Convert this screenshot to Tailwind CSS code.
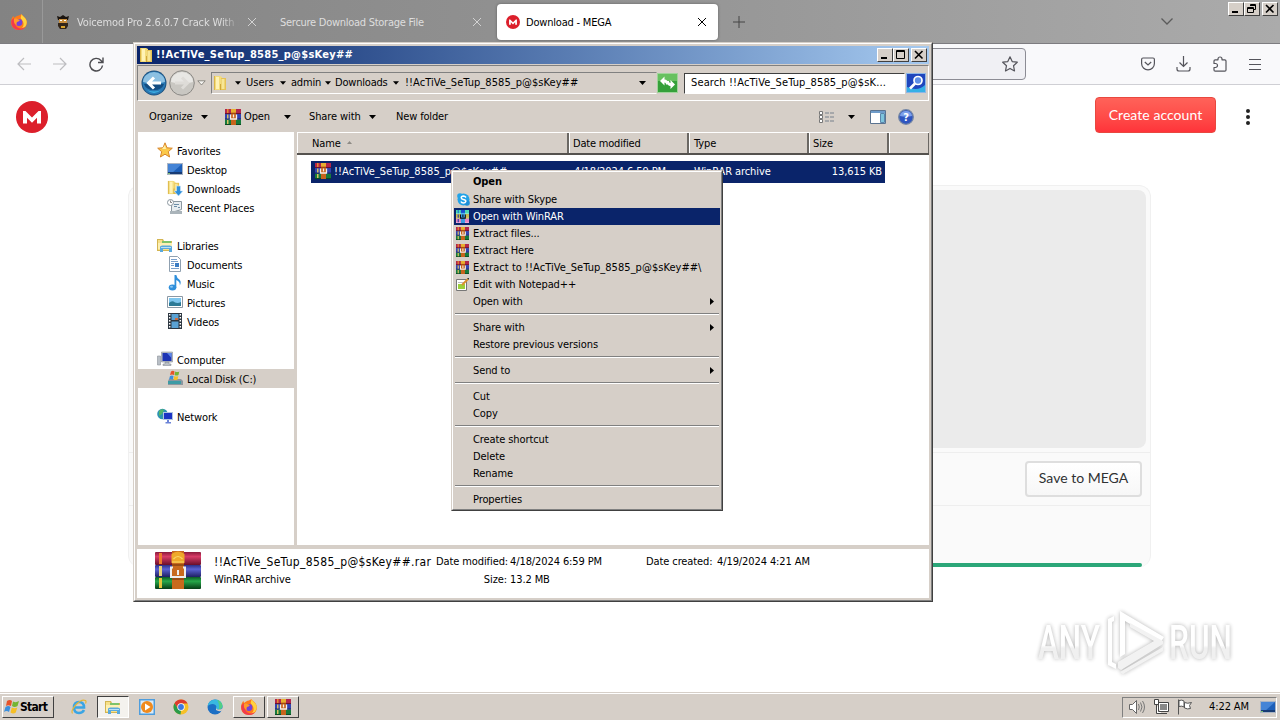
<!DOCTYPE html>
<html lang="en">
<head>
<meta charset="utf-8" />
<title>Download - MEGA</title>
<script src="https://cdn.jsdelivr.net/npm/@tailwindcss/browser@4"></script>
</head>
<body class="w-[1280px] h-[720px] overflow-hidden bg-white font-['DejaVu_Sans_Condensed','DejaVu_Sans',sans-serif] text-[11px] text-black whitespace-nowrap">

<!-- shared icons -->
<svg class="hidden">
  <symbol id="rar" viewBox="0 0 16 16">
    <path fill="#b3264a" d="M0 0h16v5H0z"/><path fill="#3344b0" d="M0 5h16v5.500H0z"/><path fill="#157a3c" d="M0 10.500h16V16H0z"/>
    <path fill="#6b1230" d="M0 4h16v1H0z"/><path fill="#1a2268" d="M0 9.500h16v1H0z"/><path fill="#0b4a22" d="M0 15h16v1H0z"/>
    <path fill="#e88a2c" d="M2 0h1.500v4H2z"/><path fill="#d8c060" d="M2 5.500h1.500v4H2zM2 11h1.500v4H2z"/>
    <path fill="#c8641c" d="M6 0h5v16H6z"/><path fill="#e9b030" d="M6 0h5v3.500H6z"/><path fill="#a24a12" d="M6 4h5v1H6z"/>
    <path fill="none" stroke="#f4f0ea" stroke-width="1.300" d="M5.500 5.500v4.500h6v-4.500M8.500 5.500v3"/>
  </symbol>
  <symbol id="folder" viewBox="0 0 16 16">
    <path fill="#dcb748" d="M2 1h6v14H2z"/><path fill="#f3dc7c" d="M3 1h5l2 1v13H3z"/><path fill="#fff3b5" d="M4 2h3v12H4z"/>
    <path fill="#e6c255" d="M9 3h5v12H9z"/><path fill="#f7e696" d="M9.500 4h3v10h-3z"/><path fill="#cfa83a" d="M8 9h1v6H8z"/>
  </symbol>
  <symbol id="library" viewBox="0 0 16 16">
    <path fill="#d3b552" d="M0 2h6l1 2h8v10H0z"/><path fill="#f6e08a" d="M1 3h4l1 2h8v8H1z"/><path fill="#7cc36a" d="M5 4h9v3H5z"/>
    <path fill="#fdf0b4" d="M1 6h14v6H1z"/><path fill="#5aa9dd" d="M3 9.500l2-1h8l2 1V15h-3v-3H6v3H3z"/><path fill="#b8e0f7" d="M4 10h10v1H4z"/>
  </symbol>
  <symbol id="firefox" viewBox="0 0 16 16">
    <path fill="#ff7a1a" d="M8 1.500C10 .5 10.500 0 10.500 0c.5 2 4 3 5 6.500C17 12 13 16 8 16S0 12.500 0 8.500C0 5 1.500 2.500 2.500 2l.5 2c1-1 3-2.500 5-2.500z"/>
    <path fill="#ffd23c" d="M10.500 0c.5 2 5 4 5.200 7.500C16 12 13 14.500 10 15c3-2.500 3-5 2-7.500-1-2-3-3-2-5z"/>
    <path fill="#f03a4e" d="M.3 7C0 12 3 16 8 16c3 0 5-1 6-3-3 2-7 2-9-1C3 9.500 3 6 3 4 1.500 5 .7 6 .3 7z"/>
    <circle cx="8" cy="8.500" r="3.400" fill="#7542d8"/><path fill="#ff9a2a" d="M3 5c2-1 3 0 4 .3L9 6 7.500 7.500C5 8 5.500 10 6 11 3 10 2.500 7 3 5z"/>
  </symbol>
  <symbol id="mega" viewBox="0 0 32 32">
    <circle cx="16" cy="16" r="16" fill="#dc1f2b"/>
    <path fill="#fff" d="M7 22.500V10h2.500l6.500 6.500L22.500 10H25v12.500h-4V16.800l-5 5-5-5v5.700z"/>
  </symbol>
  <symbol id="close" viewBox="0 0 10 10"><path fill="none" stroke="currentColor" d="M1 1l8 8M9 1L1 9"/></symbol>
  <symbol id="down" viewBox="0 0 7 4"><path fill="currentColor" d="M0 0h7L3.500 4z"/></symbol>
  <symbol id="monitor" viewBox="0 0 16 16">
    <path fill="#a9b4c4" d="M0 2h16v12H0z"/><path fill="#1d5fb8" d="M1 3h14v9H1z"/><path fill="#4484d6" d="M1 3h14L5 12H1z"/><path fill="#173b75" d="M1 11h14v2H1z"/><path fill="#7cc36a" d="M1 12h2v1H1z"/>
  </symbol>
</svg>

<div class="flex flex-col w-full h-full">

  <!-- tab strip -->
  <div class="flex items-center h-[44px] shrink-0 border-b border-[#7d7c80] bg-linear-to-r from-[#838383] via-[#949494] to-[#ababab]">
    <div class="flex items-center justify-center w-[43px] h-full border-r border-[#999] pr-1"><svg class="w-4 h-4"><use href="#firefox"/></svg></div>
    <div class="flex items-center w-[222px] pl-[13px] text-[#dedede]">
      <svg class="w-[14px] h-[15px] mr-[7px]" viewBox="0 0 14 15"><path fill="#1b1510" d="M1 2l3 1 3-2 3 2 3-1-1 4H2z"/><path fill="#c98f3e" d="M3 5h8v5H3z"/><path fill="#32251a" d="M2 9h10v3l-2 3H4l-2-3z"/><path fill="#fff" d="M4 6h2v1H4zM8 6h2v1H8z"/><path fill="#d9a32c" d="M5 12h4v2H5z"/></svg>
      <span class="w-[162px] pt-1 overflow-hidden tracking-[-0.14px] mask-r-from-90%">Voicemod Pro 2.6.0.7 Crack With L</span>
      <svg class="w-[10px] h-[10px] ml-2 text-[#d2d2d2]"><use href="#close"/></svg>
    </div>
    <div class="flex items-center w-[232px] pl-[15px] text-[#dedede]">
      <span class="w-[192px] pt-1 tracking-[-0.27px]">Sercure Download Storage File</span>
      <svg class="w-[10px] h-[10px] text-[#d2d2d2]"><use href="#close"/></svg>
    </div>
    <div class="flex items-center w-[221px] h-9 pl-[9px] rounded bg-white shadow-[0_0_3px_rgba(0,0,0,.35)]">
      <svg class="w-[14px] h-[14px] mr-[6px]"><use href="#mega"/></svg>
      <span class="w-[171px] pt-[3px] tracking-[-0.2px]">Download - MEGA</span>
      <svg class="w-[10px] h-[10px]"><use href="#close"/></svg>
    </div>
    <svg class="w-3 h-3 ml-[15px] text-[#444]" viewBox="0 0 12 12"><path stroke="currentColor" d="M6 0v12M0 6h12"/></svg>
    <svg class="w-3 h-[7px] ml-[416px]" viewBox="0 0 12 7"><path fill="none" stroke="#5b5b5b" stroke-width="1.300" d="M.5.5L6 6 11.500.5"/></svg>
    <div class="flex self-start mt-[2px] ml-[55px]">
      <div class="w-4 h-[14px] bg-[#d6cfc8] border border-white border-r-[#404040] border-b-[#404040]"><svg viewBox="0 0 14 12"><path fill="#000" d="M3 8h6v2H3z"/></svg></div>
      <div class="w-4 h-[14px] bg-[#d6cfc8] border border-white border-r-[#404040] border-b-[#404040]"><svg viewBox="0 0 14 12"><path fill="none" stroke="#000" d="M5.500 3V1.500h5v5H9M5 2.500h6M2.500 4.500h6v5h-6zM2 5.500h7"/></svg></div>
      <div class="w-4 h-[14px] ml-[2px] bg-[#d6cfc8] border border-white border-r-[#404040] border-b-[#404040]"><svg viewBox="0 0 14 12"><path stroke="#000" stroke-width="1.600" d="M3 2l7.500 7.500M10.500 2L3 9.500"/></svg></div>
    </div>
  </div>

  <!-- navigation bar -->
  <div class="flex items-center h-[41px] shrink-0 bg-[#f9f9fb] border-b border-[#cfcfd4]">
    <svg class="w-[14px] h-[14px] ml-[17px]" viewBox="0 0 14 14" fill="none" stroke="#bdbdc0" stroke-width="1.200"><path d="M14 7H1M7 1L1 7l6 6"/></svg>
    <svg class="w-[14px] h-[14px] ml-[22px]" viewBox="0 0 14 14" fill="none" stroke="#bdbdc0" stroke-width="1.200"><path d="M0 7h13M7 1l6 6-6 6"/></svg>
    <svg class="w-[15px] h-[15px] ml-[22px]" viewBox="0 0 15 15" fill="none" stroke="#4c4c50" stroke-width="1.400"><path d="M13.500 8.500A6.300 6.300 0 1 1 12 3.500l1.500 1.500M14 .5V5.500H9"/></svg>
    <div class="flex items-center justify-end w-[772px] h-8 ml-[150px] pr-[7px] bg-[#f0f0f4] border border-[#8c8c94] rounded">
      <svg class="w-4 h-4" viewBox="0 0 16 16" fill="none" stroke="#55555c" stroke-width="1.200" stroke-linejoin="round"><path d="M8 .8l2.200 4.800 5.100.6-3.800 3.500 1 5.200L8 12.400 3.500 14.900l1-5.200L.7 6.200l5.100-.6z"/></svg>
    </div>
    <div class="flex items-center gap-[21px] ml-[115px]">
      <svg class="w-[14px] h-[14px]" viewBox="0 0 14 14" fill="none" stroke="#55555c" stroke-width="1.200"><path d="M2 1h10q1.400 0 1.400 1.400V6.500a6.400 6.400 0 0 1-12.800 0V2.400Q.6 1 2 1zM3.800 5L7 8l3.200-3"/></svg>
      <svg class="w-[15px] h-[16px]" viewBox="0 0 15 16" fill="none" stroke="#55555c" stroke-width="1.200"><path d="M7.500 0v10.500M3.500 6.500l4 4 4-4M1 11v2q0 2 2 2h9q2 0 2-2v-2"/></svg>
      <svg class="w-4 h-4" viewBox="0 0 16 16" fill="none" stroke="#55555c" stroke-width="1.200" stroke-linejoin="round"><path d="M2 5q0-1.200 1.200-1.200H6V3a2 2 0 0 1 4 0v.8h2.800Q14 3.800 14 5v9q0 1.200-1.200 1.200H3.200Q2 15.200 2 14v-2.500h1.500a2 2 0 0 0 0-4H2z"/></svg>
      <svg class="w-3 h-[11px]" viewBox="0 0 12 11"><path stroke="#55555c" d="M0 .5h12M0 5.500h12M0 10.500h12"/></svg>
    </div>
  </div>

  <!-- MEGA page -->
  <div class="flex-1 bg-white">
    <div class="flex h-[100px] pt-3 items-start">
      <svg class="w-8 h-8 ml-4 mt-1"><use href="#mega"/></svg>
      <div class="flex items-center justify-center w-[121px] h-9 ml-[1047px] pb-[2px] rounded bg-linear-to-b from-[#ff6259] to-[#ff333a] border border-[#e8483f] text-white font-[Lato,sans-serif] text-[14px] tracking-[0.05px]">Create account</div>
      <svg class="w-1 h-4 ml-[30px] mt-3" viewBox="0 0 4 16" fill="#222"><circle cx="2" cy="2" r="2"/><circle cx="2" cy="8" r="2"/><circle cx="2" cy="14" r="2"/></svg>
    </div>
    <div class="w-[1023px] ml-[128px] bg-[#fafafa] border border-b-0 border-[#f0f0f0] rounded-xl">
      <div class="h-[258px] mt-1 mx-1 rounded-lg bg-[#ebebeb]"></div>
      <div class="flex items-center justify-end h-[54px] mt-[4px] pr-[8px] border-y border-[#eee]">
        <div class="flex items-center justify-center w-[117px] h-9 pb-[3px] rounded border-2 border-[#dedede] bg-linear-to-b from-white to-[#f7f7f7] font-[Lato,sans-serif] text-[14px] text-[#303233]">Save to MEGA</div>
      </div>
      <div class="flex flex-col justify-end h-[61px] px-2"><div class="h-1 rounded-full bg-[#2ba678]"></div></div>
    </div>
  </div>

  <!-- taskbar -->
  <div class="h-[28px] shrink-0 bg-[#d6cfc8] border-t border-[#d6cfc8]">
    <div class="flex items-center h-full border-t border-white pl-[2px] pr-[3px]">
      <div class="flex items-center w-[52px] h-[22px] pl-[1px] bg-[#d6cfc8] border border-white border-r-[#404040] border-b-[#404040] font-bold text-[12px] tracking-[-0.7px]">
        <svg class="w-4 h-4 shrink-0" viewBox="0 0 16 16"><path fill="#e6532a" d="M3 2q3-2 5 0L7 7Q4 5.500 2 7z"/><path fill="#74b533" d="M9 2.500q3 1.500 6-.5l-1.500 5q-3 2-5.500 0z"/><path fill="#3b8fdd" d="M1.500 8q3-2 5 0l-1.500 5q-2.500-2-5 0z"/><path fill="#f6bf26" d="M7.800 8.500q3 1.500 5.500 0l-1.500 5q-2.500 2-5.300 0z"/></svg>Start
      </div>
      <svg class="w-4 h-4 ml-[17px]" viewBox="0 0 16 16" fill="none"><path stroke="#3aa5e4" stroke-width="2.600" d="M13 11q-1.500 3-5 3-5 0-5-5.500T8 3q5 0 5 5.500H4"/><path stroke="#e5b637" stroke-width="1.200" d="M1.500 14.500C-1 11 9-1 14.500 1.500q1 1 0 3"/></svg>
      <div class="flex items-center justify-center w-[32px] h-[22px] ml-[10px] bg-[#f4f2ee] border border-[#404040] border-r-white border-b-white"><svg class="w-4 h-4"><use href="#library"/></svg></div>
      <svg class="w-4 h-4 ml-[10px]" viewBox="0 0 16 16"><path fill="#4e9ddd" d="M0 0h16v16H0z"/><path fill="#dcebf7" d="M1.500 1.500h13v13h-13z"/><circle cx="8" cy="8" r="6" fill="#f08a1d"/><path fill="#fff" d="M6 4.500v7L11.500 8z"/></svg>
      <svg class="w-4 h-4 ml-[18px]" viewBox="0 0 16 16"><circle cx="8" cy="8" r="7.500" fill="#f6c026"/><path fill="#dc3b2f" d="M1.500 4.200A7.500 7.500 0 0 1 14.600 4.500H8L5 10z"/><path fill="#2a9b4a" d="M1.500 4.200L5 9.800 8 11.500 7.500 15.500A7.500 7.500 0 0 1 1.500 4.200z"/><circle cx="8" cy="8" r="3.700" fill="#fff"/><circle cx="8" cy="8" r="2.900" fill="#3c78e0"/></svg>
      <svg class="w-4 h-4 ml-[18px]" viewBox="0 0 16 16"><circle cx="8" cy="8" r="7.500" fill="#1c6fc4"/><path fill="#39b8e0" d="M.5 7Q2 .5 8.500.5 15 1 15.500 7q0 3-3.500 3.500-3 0-3-1.500 1-1.500-.5-3Q5 3.500.5 7z"/><path fill="#52cf84" d="M10 .8q5.500 2 5.500 6.500-.5 3-3.800 3.200Q13 5 10 .8z"/><path fill="#d6cfc8" d="M9 9q1 2 3 1.500 2.500 0 3.500-1.500v2.500q-4 1.500-6.500-.5z"/></svg>
      <div class="flex items-center justify-center w-[32px] h-[22px] ml-[10px] bg-[#d6cfc8] border border-white border-r-[#404040] border-b-[#404040]"><svg class="w-4 h-4"><use href="#firefox"/></svg></div>
      <div class="flex items-center justify-center w-[32px] h-[22px] ml-[2px] bg-[#d6cfc8] border border-white border-r-[#404040] border-b-[#404040]"><svg class="w-4 h-4"><use href="#rar"/></svg></div>
      <div class="flex items-center w-[155px] h-[21px] ml-auto pl-[6px] border border-[#808080] border-r-white border-b-white">
        <svg class="w-4 h-4" viewBox="0 0 16 16"><path fill="#fff" stroke="#666" d="M.5 5.500h3l4-4v13l-4-4h-3z"/><path fill="none" stroke="#777" d="M9.500 5q1.500 3 0 6M11.500 3.500q3 4.500 0 9M13.500 2q4 6 0 12"/></svg>
        <svg class="w-4 h-4 ml-2" viewBox="0 0 16 16"><path fill="#fff" stroke="#444" d="M5.500 3.500h10v9h-10zM1.500.5h4v5h-4zM3.500 5.500v9h5M7 14.500h7"/><path fill="#888" d="M7 5h7v6H7z"/></svg>
        <svg class="w-4 h-4 ml-2" viewBox="0 0 16 16"><path fill="#fff" stroke="#555" d="M1.500 15.500v-15M2 1.500q3-1 5 .5v6q-2-1.500-5-.5zM7.500 3.500q3 1.500 7 0l-2 3 1 3q-3 1-6-.5z"/></svg>
        <span class="ml-[16px] pt-[1px] tracking-[-0.1px]">4:22 AM</span>
        <svg class="w-4 h-4 ml-auto"><use href="#monitor"/></svg>
      </div>
    </div>
  </div>
</div>

<!-- watermark -->
<svg class="absolute left-[1030px] top-[604px] w-[220px] h-[76px] opacity-80 drop-shadow-[0_0_2px_rgba(0,0,0,.38)]" viewBox="0 0 220 76" fill="#fff">
  <defs><linearGradient id="wm" x2="0" y2="1"><stop offset=".55" stop-color="#fff"/><stop offset=".6" stop-color="#ededed"/></linearGradient></defs>
  <text x="8" y="55" fill="url(#wm)" font-family="Roboto" font-size="49" font-weight="500" textLength="62" lengthAdjust="spacingAndGlyphs">ANY</text>
  <text x="139" y="55" fill="url(#wm)" font-family="Roboto" font-size="49" font-weight="500" textLength="63" lengthAdjust="spacingAndGlyphs">RUN</text>
  <path d="M78 15l6-3v5l-2 1v40l4 2v5l-8-4zM90 7l44 26-3 5L95 17v33l-5 3z"/>
  <path fill="#f0f0f0" d="M88 58l36-21-24-14v-4l33 18v3L91 66l-3-2zM90 68l43-25v4L93 70z"/>
</svg>

<!-- explorer window -->
<div class="absolute left-[133px] top-[42px] w-[800px] h-[560px] bg-[#d6cfc8] border border-[#d6cfc8] border-r-[#404040] border-b-[#404040]">
<div class="flex flex-col h-full border border-white border-r-[#808080] border-b-[#808080] p-[2px]">

  <div class="flex items-center h-[18px] pl-[1px] pr-[2px] bg-linear-to-r from-[#0a246a] to-[#a6caf0] text-white font-bold">
    <svg class="w-4 h-4 mr-[2px]"><use href="#folder"/></svg>
    <span class="pt-[1px] tracking-[0.27px]">!!AcTiVe_SeTup_8585_p@$sKey##</span>
    <div class="flex ml-auto">
      <div class="w-4 h-[14px] bg-[#d6cfc8] border border-white border-r-[#404040] border-b-[#404040]"><svg viewBox="0 0 14 12"><path fill="#000" d="M3 8h6v2H3z"/></svg></div>
      <div class="w-4 h-[14px] bg-[#d6cfc8] border border-white border-r-[#404040] border-b-[#404040]"><svg viewBox="0 0 14 12"><path fill="none" stroke="#000" d="M2.500 1.500h8v8h-8zM2 2.500h9"/></svg></div>
      <div class="w-4 h-[14px] ml-[2px] bg-[#d6cfc8] border border-white border-r-[#404040] border-b-[#404040]"><svg viewBox="0 0 14 12"><path stroke="#000" stroke-width="1.600" d="M3 2l7.500 7.500M10.500 2L3 9.500"/></svg></div>
    </div>
  </div>

  <!-- address bar -->
  <div class="flex items-center h-[36px] mt-[1px] pl-[3px] border border-[#808080] border-r-white border-b-white">
    <svg class="w-[26px] h-[26px]" viewBox="0 0 26 26"><circle cx="13" cy="13" r="12.500" fill="#1d4f7c"/><circle cx="13" cy="13" r="11.500" fill="#2a79b4"/><path fill="#8cc0e2" d="M2 12a11 10 0 0 1 22 0q-11 3-22 0z"/><path fill="#134d82" d="M3 14h20q-2 6-10 6T3 14z"/><path fill="#3fb5e8" d="M6 20q7 3 14 0-7 6-14 0z"/><path fill="none" stroke="#fff" stroke-width="3" d="M20 13H8M13 7.500L7.500 13l5.500 5.500"/></svg>
    <svg class="w-[26px] h-[26px] ml-[2px]" viewBox="0 0 26 26"><circle cx="13" cy="13" r="12.300" fill="#c9c7c2" stroke="#8b8985"/><path fill="#e8e7e4" d="M2 12a11 10 0 0 1 22 0q-11 3-22 0z"/><path fill="none" stroke="#dedcd8" stroke-width="3" d="M6 13h12M13 7.500l5.500 5.500-5.500 5.500"/></svg>
    <svg class="w-[9px] h-[6px] ml-[2px]" viewBox="0 0 9 6"><path fill="#f4f3f0" stroke="#77756f" stroke-width=".8" d="M.8.800h7.400L4.500 5z"/></svg>
    <div class="flex items-center w-[446px] h-[22px] ml-[5px] border border-[#808080] border-r-[#d6cfc8] border-b-white">
      <svg class="w-4 h-4"><use href="#folder"/></svg>
      <svg class="w-[6px] h-[4px] ml-[7px]"><use href="#down"/></svg>
      <span class="w-[34px] ml-[5px]">Users</span>
      <svg class="w-[6px] h-[4px]"><use href="#down"/></svg>
      <span class="w-[34px] ml-[5px] tracking-[-0.2px]">admin</span>
      <svg class="w-[6px] h-[4px]"><use href="#down"/></svg>
      <span class="w-[58px] ml-[4px] tracking-[-0.2px]">Downloads</span>
      <svg class="w-[6px] h-[4px]"><use href="#down"/></svg>
      <span class="ml-[6px] tracking-[0.05px]">!!AcTiVe_SeTup_8585_p@$sKey##</span>
      <svg class="w-[7px] h-[4px] ml-auto mr-[10px]"><use href="#down"/></svg>
    </div>
    <svg class="w-[21px] h-[20px]" viewBox="0 0 21 20"><path fill="#9fd49a" d="M0 0h21v20H0z"/><path fill="#35a03a" d="M1 1h19v18H1z"/><path fill="#67c15f" d="M1 1h19v7H1z"/><path fill="#fff" d="M3 8l4.500-4.500v3q3.500 0 3.500 5H9q0-2-1.500-2v3zM18 11.500l-4.500 4.500v-3q-3.500 0-3.500-5h2q0 2 1.500 2V7z"/></svg>
    <div class="flex items-center w-[221px] h-[21px] ml-[6px] pl-[6px] bg-white border border-[#404040] border-r-white border-b-white tracking-[0.13px]">Search !!AcTiVe_SeTup_8585_p@$sK...</div>
    <svg class="w-[20px] h-[20px] ml-[1px]" viewBox="0 0 20 20"><path fill="#8db6e6" d="M0 0h20v20H0z"/><path fill="#1f46bd" d="M1 1h18v18H1z"/><path fill="#36b0e6" d="M1 19h18v-7Q12 19 1 14z"/><circle cx="12" cy="7.500" r="4" fill="#5f8fe6" stroke="#fff" stroke-width="1.700"/><path stroke="#fff" stroke-width="2.600" d="M9 10.500L4 15.500"/></svg>
  </div>

  <!-- command bar -->
  <div class="flex items-center h-[31px] pl-3 pr-[15px]">
    <span class="w-[52px] pt-[2px] tracking-[-0.1px]">Organize</span>
    <svg class="w-[7px] h-[4px]"><use href="#down"/></svg>
    <svg class="w-4 h-4 ml-[17px]"><use href="#rar"/></svg>
    <span class="w-[40px] pt-[2px] ml-[3px] tracking-[-0.1px]">Open</span>
    <svg class="w-[7px] h-[4px]"><use href="#down"/></svg>
    <span class="w-[60px] pt-[2px] ml-[18px] tracking-[-0.1px]">Share with</span>
    <svg class="w-[7px] h-[4px]"><use href="#down"/></svg>
    <span class="ml-[20px] pt-[2px] tracking-[-0.15px]">New folder</span>
    <svg class="w-4 h-3 ml-auto" viewBox="0 0 16 12"><path fill="#fff" stroke="#777" d="M.5.500h3v3h-3zM.5 4.500h3v3h-3zM.5 8.500h3v3h-3z"/><path stroke="#77808c" stroke-dasharray="4 1" d="M6 2h9M6 6h9M6 10h9"/></svg>
    <svg class="w-[7px] h-[4px] ml-[13px]"><use href="#down"/></svg>
    <svg class="w-4 h-[14px] ml-[15px]" viewBox="0 0 16 14"><path fill="#fff" stroke="#5a7390" d="M.5.500h15v13H.5z"/><path fill="#6f9cca" d="M1 1h14v2H1z"/><path fill="#7ec4dc" stroke="#5a86ac" d="M10.500 3.500h4v9h-4z"/></svg>
    <svg class="w-4 h-4 ml-3" viewBox="0 0 16 16"><circle cx="8" cy="8" r="7.300" fill="#2f55c0" stroke="#7587a5" stroke-width="1.300"/><path fill="#7da0ea" d="M2 7a6 5 0 0 1 12 0q-6 1-12 0z"/><text x="8" y="12.200" fill="#fff" font-size="11" font-weight="bold" text-anchor="middle">?</text></svg>
  </div>

  <div class="flex flex-1 min-h-0">
    <!-- navigation pane -->
    <div class="w-[157px] pt-[9px] bg-white leading-[19px] border-l border-[#d6cfc8] tracking-[-0.12px] *:pt-[2px] [&_svg]:mb-[3px]">
      <div class="flex items-center h-[19px] pl-[19px]"><svg class="w-4 h-4 mr-1" viewBox="0 0 16 16"><path fill="#fbc94a" stroke="#d8862c" d="M8 .8l2 5 5.300.4-4 3.500 1.300 5.300L8 12.200 3.400 15l1.300-5.300-4-3.500L6 5.800z"/><path fill="#fff0a8" d="M8 3l1 4H5z"/></svg>Favorites</div>
      <div class="flex items-center h-[19px] pl-[29px]"><svg class="w-4 h-4 mr-1"><use href="#monitor"/></svg>Desktop</div>
      <div class="flex items-center h-[19px] pl-[29px]"><svg class="w-4 h-4 mr-1" viewBox="0 0 16 16"><use href="#folder" x="-1" width="15" height="15"/><path fill="#2f8fdb" stroke="#d4e9f8" stroke-width=".6" d="M9.500 6h4v5H16l-4.500 5L7 11h2.500z"/></svg>Downloads</div>
      <div class="flex items-center h-[19px] pl-[29px]"><svg class="w-4 h-4 mr-1" viewBox="0 0 16 16"><path fill="#e8edf0" stroke="#8b979f" d="M4.500 2.500h10v8l-10 3z"/><path fill="#aab4ba" d="M3 12h12v3H3z"/><path stroke="#6d8fa8" d="M7 5.500h5M7 7.500h3M11 8.500h2"/><circle cx="3.500" cy="3.500" r="3" fill="#fff" stroke="#8b979f"/><path fill="none" stroke="#666" stroke-width=".8" d="M3.500 1.500v2H5"/></svg>Recent Places</div>
      <div class="flex items-center h-[19px] mt-[19px] pl-[19px]"><svg class="w-4 h-4 mr-1"><use href="#library"/></svg>Libraries</div>
      <div class="flex items-center h-[19px] pl-[29px]"><svg class="w-4 h-4 mr-1" viewBox="0 0 16 16"><path fill="#fff" stroke="#8fa0b0" d="M2.500.500h8l3 3v12h-11z"/><path fill="none" stroke="#7aa0cc" d="M4 3.500h6M4 5.500h7M4 7.500h3M4 9.500h3M4 12.500h8"/><path fill="#3a7cc4" d="M8 7h4v4H8z"/></svg>Documents</div>
      <div class="flex items-center h-[19px] pl-[29px]"><svg class="w-4 h-4 mr-1" viewBox="0 0 16 16"><ellipse cx="5.500" cy="12.500" rx="3.800" ry="3" fill="#2f8fdb"/><path fill="#2f8fdb" d="M7.500 0h1.800q.5 3 3 4.500 2.500 2 .5 6 .5-4-3.500-5.500v8H7.500z"/><ellipse cx="4.500" cy="11.800" rx="1.500" ry="1" fill="#8cc8f2"/></svg>Music</div>
      <div class="flex items-center h-[19px] pl-[29px]"><svg class="w-4 h-4 mr-1" viewBox="0 0 16 16"><path fill="#fff" stroke="#8b98a4" d="M.5 2.500h15v11H.5z"/><path fill="#7ec6ee" d="M2 4h12v8H2z"/><path fill="#2c7a96" d="M2 9q3-3 6-.5 3 1 6-.5v4H2z"/></svg>Pictures</div>
      <div class="flex items-center h-[19px] pl-[29px]"><svg class="w-4 h-4 mr-1" viewBox="0 0 16 16"><path fill="#2c3640" d="M1 0h14v16H1z"/><path fill="#5aa2d4" d="M4.500 1h7v6h-7zM4.500 8.500h7V15h-7z"/><path fill="#d06a3c" d="M8 5h3v2H8z"/><path stroke="#fff" stroke-width="1.500" stroke-dasharray="1.500 1.500" d="M2.700 1v15M13.300 1v15"/></svg>Videos</div>
      <div class="flex items-center h-[19px] mt-[19px] pl-[19px]"><svg class="w-4 h-4 mr-1" viewBox="0 0 16 16"><path fill="#b9bfc6" stroke="#8a9199" stroke-width=".6" d="M.5 5h3v9h-3zM4.500 1h11v10h-11zM8 11h4v2h2v1.500H6V13h2z"/><path fill="#1c34b4" d="M5.500 2h9v8h-9z"/><path fill="#5d86e8" d="M10 2h4.500v5z"/></svg>Computer</div>
      <div class="flex items-center h-[19px] pl-[29px] bg-[#d6cfc8]"><svg class="w-4 h-4 mr-1" viewBox="0 0 16 16"><path fill="#8c969e" d="M2 9h12l2 2v4H1v-4z"/><path fill="#3d9ba5" d="M1 11h13v3H1z"/><path fill="#e6532a" d="M4 1.500q2-1.500 3.500 0L7 5Q5 4 3 5z"/><path fill="#74b533" d="M8.300 1.500q2 1 4 0L11.500 5q-2 1-4 0z"/><path fill="#3b8fdd" d="M3 6q2-1 3.500 0L6 9.500q-2-1-4 0z"/><path fill="#f6bf26" d="M7.300 6q2 1 4 0l-.8 3.500q-2 1-4 0z"/></svg>Local Disk (C:)</div>
      <div class="flex items-center h-[19px] mt-[19px] pl-[19px]"><svg class="w-4 h-4 mr-1" viewBox="0 0 16 16"><circle cx="5.500" cy="6" r="5.300" fill="#2c93b4"/><path fill="#52b56a" d="M2 3q3-3 5-1L5 6 2 8zM5 9l3-1-1 3z"/><path fill="#b0c4e0" d="M6 4h10v8H6z"/><path fill="#1c34c4" d="M7 5h8v6H7z"/><path fill="#6c84d8" d="M10 12h2v2h2v1.500H8.500V14H10z"/></svg>Network</div>
    </div>
    <div class="w-[3px]"></div>

    <!-- file list -->
    <div class="flex-1 bg-white">
      <div class="flex h-[23px] bg-[#d6cfc8] border-t border-t-white border-b-2 border-b-[#55524e] leading-[22px] tracking-[-0.1px]">
        <div class="w-[272px] pl-[14px] border-l border-l-white border-r-2 border-r-[#6b6864]">Name<svg class="inline w-[5px] h-[3px] ml-[6px] mb-1" viewBox="0 0 5 3"><path fill="#8d8a84" d="M0 3h5L2.500 0z"/></svg></div>
        <div class="w-[120px] pl-[3px] border-l border-l-white border-r-2 border-r-[#6b6864] tracking-[-0.2px]">Date modified</div>
        <div class="w-[120px] pl-[4px] border-l border-l-white border-r-2 border-r-[#6b6864]">Type</div>
        <div class="w-[80px] pl-[3px] border-l border-l-white border-r-2 border-r-[#6b6864]">Size</div>
        <div class="flex-1 border-l border-l-white border-r border-r-[#6b6864]"></div>
      </div>
      <div class="flex items-center w-[574px] h-[22px] mt-[6px] ml-[14px] pl-1 pr-[3px] bg-[#0a246a] text-white tracking-[-0.1px] [&>span]:pt-[1px]">
        <svg class="w-4 h-4 mb-[2px] mr-[3px]"><use href="#rar"/></svg>
        <span class="w-[240px] tracking-[0.05px]">!!AcTiVe_SeTup_8585_p@$sKey##</span>
        <span class="w-[120px]">4/18/2024 6:59 PM</span>
        <span>WinRAR archive</span>
        <span class="ml-auto">13,615 KB</span>
      </div>
    </div>
  </div>

  <!-- details pane -->
  <div class="flex h-[49px] mt-[4px] pl-[18px] pt-[2px] bg-white leading-[18px] tracking-[-0.1px]">
    <svg class="w-[46px] h-[38px]" viewBox="0 0 46 38">
      <defs>
        <linearGradient id="r" x2="0" y2="1"><stop stop-color="#8a1a3a"/><stop offset=".35" stop-color="#d83c68"/><stop offset="1" stop-color="#6a0f2a"/></linearGradient>
        <linearGradient id="b" x2="0" y2="1"><stop stop-color="#2c2f86"/><stop offset=".35" stop-color="#5a62d4"/><stop offset="1" stop-color="#1e1f62"/></linearGradient>
        <linearGradient id="g" x2="0" y2="1"><stop stop-color="#0c5a24"/><stop offset=".35" stop-color="#27a84a"/><stop offset="1" stop-color="#073c16"/></linearGradient>
      </defs>
      <rect width="46" height="13" y="1" rx="1" fill="url(#r)"/><rect width="46" height="12" y="14" rx="1" fill="url(#b)"/><rect width="46" height="12" y="26" rx="1" fill="url(#g)"/>
      <path fill="#ee7a2c" d="M4 2h3v11H4z"/><path fill="#e6d27a" d="M4 15h3v10H4z"/><path fill="#e2c43c" d="M4 27h3v10H4z"/>
      <path fill="#c86a1e" d="M17 0h12v38H17z"/><path fill="#efa92a" d="M16.500 3q6.500-5 13 0v9h-13z"/><path fill="none" stroke="#fbd868" stroke-width="1.200" d="M18.500 8q4.500-5 9 0M17 11h12"/><path fill="#9a4d12" d="M17 13h12v2H17zM17 27h12v2H17z"/>
      <path fill="none" stroke="#eee" stroke-width="2" d="M18 16.500h-2V26h14v-9.500h-2M23 19v5"/>
    </svg>
    <div class="w-[222px] ml-[13px] pt-[2px]">
      <div class="text-[12px] tracking-[0.33px]">!!AcTiVe_SeTup_8585_p@$sKey##.rar</div>
      <div>WinRAR archive</div>
    </div>
    <div class="w-[71px] pt-[2px] text-right"><div>Date modified:</div><div>Size:</div></div>
    <div class="w-[135px] pt-[2px] ml-[3px]"><div>4/18/2024 6:59 PM</div><div>13.2 MB</div></div>
    <div class="w-[67px] pt-[2px] ml-[1px]">Date created:</div>
    <div class="ml-1 pt-[2px]">4/19/2024 4:21 AM</div>
  </div>
</div>
</div>

<!-- context menu -->
<div class="absolute left-[451px] top-[170px] w-[272px] h-[341px] bg-[#d6cfc8] border border-[#d6cfc8] border-r-[#404040] border-b-[#404040]">
<div class="h-full border border-white border-r-[#808080] border-b-[#808080] p-[1px] leading-[17px] tracking-[-0.1px]">
  <div class="h-[17px] pl-[19px] font-bold">Open</div>
  <div class="flex items-center h-[18px] pl-[3px]"><svg class="w-[13px] h-[13px] mr-[3px]" viewBox="0 0 13 13"><circle cx="6.500" cy="6.500" r="6" fill="#22a3e8"/><circle cx="3" cy="3" r="2.800" fill="#22a3e8"/><circle cx="10" cy="10" r="2.800" fill="#1b8fd8"/><path fill="none" stroke="#fff" stroke-width="1.500" d="M9 4.500Q8 3 6.500 3 4 3.200 4.300 4.800 4.500 6 6.500 6.500 9 7 8.800 8.500 8.300 10 6.500 10 4.500 10 4 8.500"/></svg>Share with Skype</div>
  <div class="flex items-center h-[17px] pl-[2px] bg-[#0a246a] text-white"><svg class="w-[13px] h-[13px] mr-1 invert"><use href="#rar"/></svg>Open with WinRAR</div>
  <div class="flex items-center h-[17px] pl-[2px]"><svg class="w-[13px] h-[13px] mr-1"><use href="#rar"/></svg>Extract files...</div>
  <div class="flex items-center h-[17px] pl-[2px]"><svg class="w-[13px] h-[13px] mr-1"><use href="#rar"/></svg>Extract Here</div>
  <div class="flex items-center h-[17px] pl-[2px] tracking-[0.04px]"><svg class="w-[13px] h-[13px] mr-1"><use href="#rar"/></svg>Extract to !!AcTiVe_SeTup_8585_p@$sKey##\</div>
  <div class="flex items-center h-[17px] pl-[2px]"><svg class="w-[13px] h-[13px] mr-1" viewBox="0 0 13 13"><path fill="#fff" stroke="#777" d="M.5 1.500h10v11H.5z"/><path fill="#9ccf3a" d="M2 6h7v5H2z"/><path stroke="#bbb" d="M2 4.500h6"/><path stroke="#d8902c" stroke-width="2" d="M6 7l6-6"/><path fill="#333" d="M11 0h2v2z"/></svg>Edit with Notepad++</div>
  <div class="flex items-center justify-between h-[17px] pl-[19px] pr-[6px]">Open with<svg class="w-1 h-[7px]" viewBox="0 0 4 7"><path d="M0 0v7l4-3.500z"/></svg></div>
  <div class="h-[2px] mt-[3px] mb-1 mx-[1px] bg-white border-t border-[#808080]"></div>
  <div class="flex items-center justify-between h-[17px] pl-[19px] pr-[6px]">Share with<svg class="w-1 h-[7px]" viewBox="0 0 4 7"><path d="M0 0v7l4-3.500z"/></svg></div>
  <div class="h-[17px] pl-[19px]">Restore previous versions</div>
  <div class="h-[2px] mt-[3px] mb-1 mx-[1px] bg-white border-t border-[#808080]"></div>
  <div class="flex items-center justify-between h-[17px] pl-[19px] pr-[6px]">Send to<svg class="w-1 h-[7px]" viewBox="0 0 4 7"><path d="M0 0v7l4-3.500z"/></svg></div>
  <div class="h-[2px] mt-[3px] mb-1 mx-[1px] bg-white border-t border-[#808080]"></div>
  <div class="h-[17px] pl-[19px]">Cut</div>
  <div class="h-[17px] pl-[19px]">Copy</div>
  <div class="h-[2px] mt-[3px] mb-1 mx-[1px] bg-white border-t border-[#808080]"></div>
  <div class="h-[17px] pl-[19px]">Create shortcut</div>
  <div class="h-[17px] pl-[19px]">Delete</div>
  <div class="h-[17px] pl-[19px]">Rename</div>
  <div class="h-[2px] mt-[3px] mb-1 mx-[1px] bg-white border-t border-[#808080]"></div>
  <div class="h-[17px] pl-[19px]">Properties</div>
</div>
</div>

</body>
</html>
